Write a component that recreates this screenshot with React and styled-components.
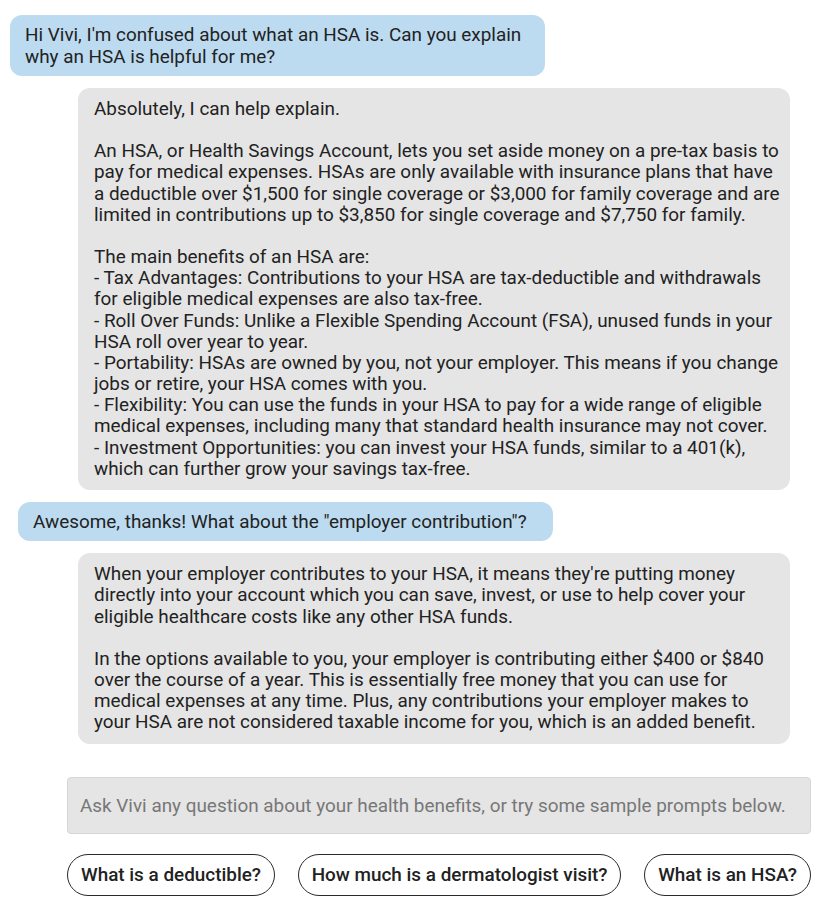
import React from "react";
import styled, { createGlobalStyle } from "styled-components";

const GlobalStyle = createGlobalStyle`
  body {
    margin: 0;
    background: #ffffff;
    font-family: Roboto, "Liberation Sans", sans-serif;
    color: #222222;
  }
`

const Page = styled.div`
  width: 828px;
  padding-top: 15px;
  display: flex;
  flex-direction: column;
`

const Thread = styled.div`
  display: flex;
  flex-direction: column;
  gap: 12px;
`

const UserBubble = styled.div`
  width: 535px;
  box-sizing: border-box;
  margin-left: ${(p) => p.$indent}px;
  padding: 9px 16px 9px 15px;
  background: #bddbf0;
  border-radius: 12px;
  font-size: 18.9px;
  line-height: 21.5px;
  color: #222222;
`

const BotBubble = styled.div`
  width: 712px;
  box-sizing: border-box;
  margin-left: 78px;
  padding: 10px 8px 11px 16px;
  background: #e5e5e5;
  border-radius: 12px;
  font-size: 18.9px;
  line-height: 21.15px;
  color: #222222;
  white-space: pre-line;
`

const Composer = styled.div`
  margin: 33px 17px 0 67px;
  display: flex;
  flex-direction: column;
  gap: 20px;
`

const PromptInput = styled.input`
  height: 57px;
  box-sizing: border-box;
  padding: 0 12px;
  background: #e5e5e5;
  border: 1px solid #d6d6d6;
  border-radius: 4px;
  font-family: Roboto, "Liberation Sans", sans-serif;
  font-size: 18.9px;
  color: #222222;
  outline: none;

  &::placeholder {
    color: #777777;
  }
`

const Suggestions = styled.div`
  display: flex;
  justify-content: space-between;
`

const Chip = styled.button`
  height: 42px;
  padding: 0 13px;
  background: #ffffff;
  border: 1.5px solid #2a2a2a;
  border-radius: 21px;
  font-family: Roboto, "Liberation Sans", sans-serif;
  font-size: 18.9px;
  font-weight: 500;
  color: #222222;
  cursor: pointer;
`

const firstAnswer = `Absolutely, I can help explain.

An HSA, or Health Savings Account, lets you set aside money on a pre-tax basis to pay for medical expenses. HSAs are only available with insurance plans that have a deductible over $1,500 for single coverage or $3,000 for family coverage and are limited in contributions up to $3,850 for single coverage and $7,750 for family.

The main benefits of an HSA are:
- Tax Advantages: Contributions to your HSA are tax-deductible and withdrawals for eligible medical expenses are also tax-free.
- Roll Over Funds: Unlike a Flexible Spending Account (FSA), unused funds in your HSA roll over year to year.
- Portability: HSAs are owned by you, not your employer. This means if you change jobs or retire, your HSA comes with you.
- Flexibility: You can use the funds in your HSA to pay for a wide range of eligible medical expenses, including many that standard health insurance may not cover.
- Investment Opportunities: you can invest your HSA funds, similar to a 401(k), which can further grow your savings tax-free.`

const secondAnswer = `When your employer contributes to your HSA, it means they're putting money directly into your account which you can save, invest, or use to help cover your eligible healthcare costs like any other HSA funds.

In the options available to you, your employer is contributing either $400 or $840 over the course of a year. This is essentially free money that you can use for medical expenses at any time. Plus, any contributions your employer makes to your HSA are not considered taxable income for you, which is an added benefit.`

const prompts = [
    "What is a deductible?",
    "How much is a dermatologist visit?",
    "What is an HSA?",
]

const App = () => {

    return (
        <Page>
            <GlobalStyle />

            <Thread>
                <UserBubble $indent={10}>
                    Hi Vivi, I'm confused about what an HSA is. Can you explain why an HSA is helpful for me?
                </UserBubble>
                <BotBubble>{firstAnswer}</BotBubble>
                <UserBubble $indent={18}>
                    Awesome, thanks! What about the "employer contribution"?
                </UserBubble>
                <BotBubble>{secondAnswer}</BotBubble>
            </Thread>

            <Composer>
                <PromptInput placeholder="Ask Vivi any question about your health benefits, or try some sample prompts below." />
                <Suggestions>
                    {prompts.map((p) => (
                        <Chip key={p}>{p}</Chip>
                    ))}
                </Suggestions>
            </Composer>
        </Page>
    );

}

export default App;
